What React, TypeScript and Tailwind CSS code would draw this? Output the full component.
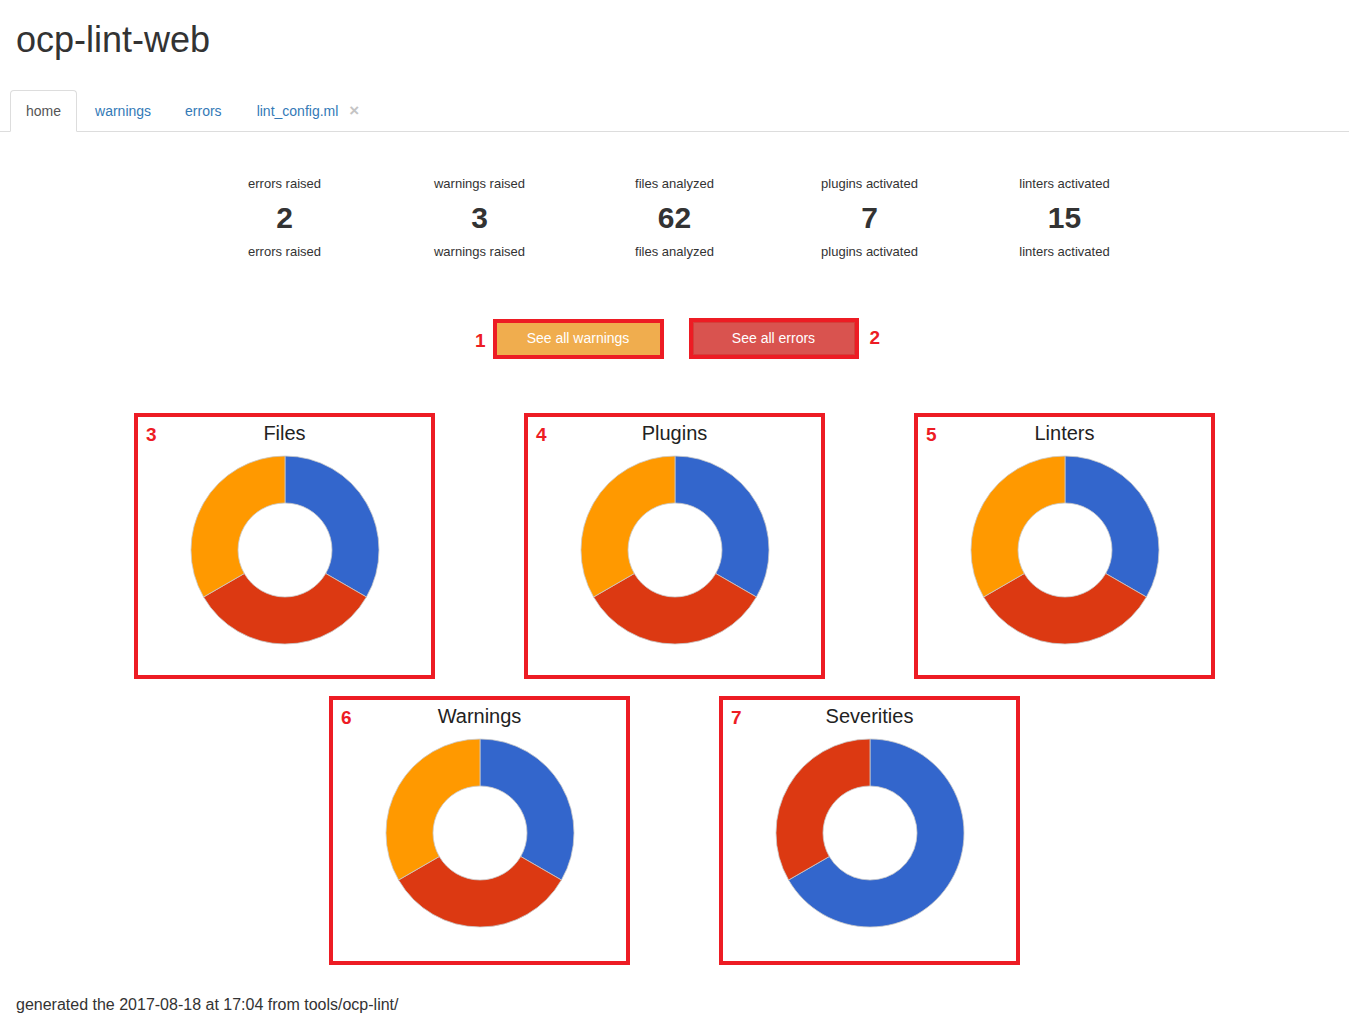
import { type ReactNode } from 'react'

type Slice = { value: number; color: string }

const BLUE = '#3366cc'
const RED = '#dc3912'
const ORANGE = '#ff9900'

const stats = [
  { label: 'errors raised', value: 2 },
  { label: 'warnings raised', value: 3 },
  { label: 'files analyzed', value: 62 },
  { label: 'plugins activated', value: 7 },
  { label: 'linters activated', value: 15 },
]

const thirds: Slice[] = [
  { value: 1, color: BLUE },
  { value: 1, color: RED },
  { value: 1, color: ORANGE },
]

const point = (cx: number, cy: number, rad: number, deg: number) => {
  const a = (deg * Math.PI) / 180
  return `${(cx + rad * Math.sin(a)).toFixed(2)} ${(cy - rad * Math.cos(a)).toFixed(2)}`
}

const arcPath = (cx: number, cy: number, R: number, r: number, a0: number, a1: number) => {
  const large = a1 - a0 > 180 ? 1 : 0
  return [
    `M ${point(cx, cy, R, a0)}`,
    `A ${R} ${R} 0 ${large} 1 ${point(cx, cy, R, a1)}`,
    `L ${point(cx, cy, r, a1)}`,
    `A ${r} ${r} 0 ${large} 0 ${point(cx, cy, r, a0)}`,
    'Z',
  ].join(' ')
}

const Donut = ({ slices }: { slices: Slice[] }) => {
  const total = slices.reduce((s, x) => s + x.value, 0)
  let start = 0
  return (
    <svg width="190" height="190" viewBox="0 0 190 190">
      {slices.map((s, i) => {
        const end = start + (s.value / total) * 360
        const d = arcPath(95, 95, 94, 47, start, end)
        start = end
        return <path key={i} d={d} fill={s.color} stroke="#c9c9c9" strokeWidth="0.8" />
      })}
    </svg>
  )
}

const Marker = ({ n, className }: { n: number; className: string }) => (
  <span className={`text-[19px] font-bold leading-none text-[#ed1c24] ${className}`}>{n}</span>
)

const ChartBox = ({ n, title, slices, tall }: { n: number; title: string; slices: Slice[]; tall?: boolean }) => (
  <div
    className={`relative flex w-[301px] flex-col items-center border-4 border-[#ed1c24] ${
      tall ? 'h-[269px]' : 'h-[266px]'
    }`}
  >
    <Marker n={n} className="absolute left-[8px] top-[8px]" />
    <div className="pt-1 text-[20px] leading-6 text-[#222]">{title}</div>
    <div className="mt-[10px]">
      <Donut slices={slices} />
    </div>
  </div>
)

const Tab = ({ active, children }: { active?: boolean; children: ReactNode }) => (
  <li
    className={`-mb-px mr-[2px] flex items-center rounded-t border px-[15px] py-[10px] text-[14px] leading-5 ${
      active ? 'border-[#ddd] border-b-transparent bg-white text-[#555]' : 'border-transparent text-[#337ab7]'
    }`}
  >
    {children}
  </li>
)

const App = () => {
  return (
    <div className="min-h-[1035px] bg-white font-['Liberation_Sans',Arial,sans-serif] text-[#333]">
      <h1 className="mt-5 pl-4 text-[36px] leading-[40px]">ocp-lint-web</h1>

      <ul className="mt-[30px] flex border-b border-[#ddd] pl-[10px]">
        <Tab active>home</Tab>
        <Tab>warnings</Tab>
        <Tab>errors</Tab>
        <Tab>
          <span className="ml-px">lint_config.ml</span>
          <span className="ml-[11px] text-[17px] font-bold leading-5 text-[#c4c4c4]">×</span>
        </Tab>
      </ul>

      <div className="mt-[43px] flex justify-center">
        {stats.map((s) => (
          <div key={s.label} className="w-[195px] text-center">
            <div className="text-[13px] leading-[18px]">{s.label}</div>
            <div className="mt-2 text-[30px] font-bold leading-[33px]">{s.value}</div>
            <div className="mt-[9px] text-[13px] leading-[18px]">{s.label}</div>
          </div>
        ))}
      </div>

      <div className="mt-[57px] flex items-center justify-center pl-[6px]">
        <Marker n={1} className="mr-[7px] mt-[4px]" />
        <div className="border-4 border-[#ed1c24]">
          <button className="h-[32px] w-[163px] bg-[#f0ad4e] text-[14px] text-white">See all warnings</button>
        </div>
        <div className="ml-[25px] border-4 border-[#ed1c24]">
          <button className="h-[33px] w-[162px] border border-[#d43f3a] bg-[#d9534f] text-[14px] text-white">
            See all errors
          </button>
        </div>
        <Marker n={2} className="ml-[11px] -mt-[2px]" />
      </div>

      <div className="mt-[54px] flex justify-center gap-[89px]">
        <ChartBox n={3} title="Files" slices={thirds} />
        <ChartBox n={4} title="Plugins" slices={thirds} />
        <ChartBox n={5} title="Linters" slices={thirds} />
      </div>

      <div className="mt-[17px] flex justify-center gap-[89px]">
        <ChartBox n={6} title="Warnings" slices={thirds} tall />
        <ChartBox
          n={7}
          title="Severities"
          slices={[
            { value: 2, color: BLUE },
            { value: 1, color: RED },
          ]}
          tall
        />
      </div>

      <p className="mt-[31px] pl-4 text-[16px] leading-[18px]">
        generated the 2017-08-18 at 17:04 from tools/ocp-lint/
      </p>
    </div>
  )
}

export default App
